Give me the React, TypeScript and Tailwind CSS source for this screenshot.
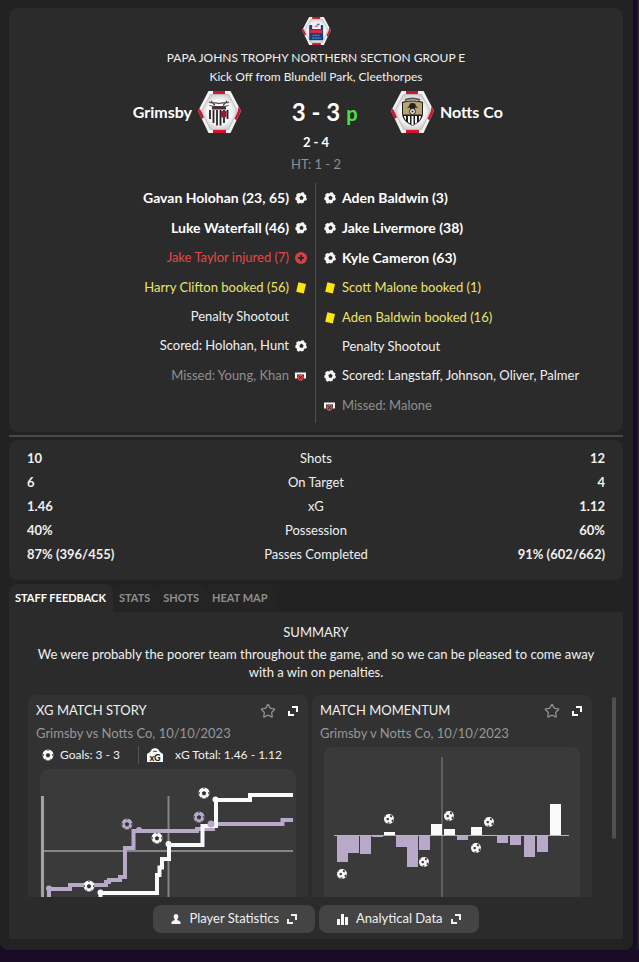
import { useState } from "react";
import type { ReactNode } from "react";
import { Star } from "lucide-react";
import clsx from "clsx";

type EventKind = "goal" | "injury" | "card" | "miss" | "note" | "scored";

type MatchEvent = { kind: EventKind; text: string };

const homeEvents: MatchEvent[] = [
  { kind: "goal", text: "Gavan Holohan (23, 65)" },
  { kind: "goal", text: "Luke Waterfall (46)" },
  { kind: "injury", text: "Jake Taylor injured (7)" },
  { kind: "card", text: "Harry Clifton booked (56)" },
  { kind: "note", text: "Penalty Shootout" },
  { kind: "scored", text: "Scored: Holohan, Hunt" },
  { kind: "miss", text: "Missed: Young, Khan" },
];

const awayEvents: MatchEvent[] = [
  { kind: "goal", text: "Aden Baldwin (3)" },
  { kind: "goal", text: "Jake Livermore (38)" },
  { kind: "goal", text: "Kyle Cameron (63)" },
  { kind: "card", text: "Scott Malone booked (1)" },
  { kind: "card", text: "Aden Baldwin booked (16)" },
  { kind: "note", text: "Penalty Shootout" },
  { kind: "scored", text: "Scored: Langstaff, Johnson, Oliver, Palmer" },
  { kind: "miss", text: "Missed: Malone" },
];

const stats = [
  { label: "Shots", home: "10", away: "12" },
  { label: "On Target", home: "6", away: "4" },
  { label: "xG", home: "1.46", away: "1.12" },
  { label: "Possession", home: "40%", away: "60%" },
  { label: "Passes Completed", home: "87% (396/455)", away: "91% (602/662)" },
];

const tabs = ["STAFF FEEDBACK", "STATS", "SHOTS", "HEAT MAP"];

// x position and value, negative values are home momentum
const momentum = [
  [13, -26], [24, -17], [36, -18], [48, -1], [60, 4], [72, -11], [83, -31], [95, -14], [107, 12],
  [120, 7], [133, -4], [147, 9], [160, 1], [173, -7], [186, -9], [200, -21], [213, -16], [226, 32],
];

const momentumGoals = [
  [65, 72], [125, 69], [165, 75], [152, 101], [100, 115], [18, 127],
];

const textStyles: Record<EventKind, string> = {
  goal: "text-sm font-bold text-white",
  injury: "text-[#e8474a]",
  card: "text-[#ebe46c]",
  miss: "text-[#8f8f8f]",
  note: "text-[#f0f0f0]",
  scored: "text-[#f0f0f0]",
};

function EventIcon({ kind }: { kind: EventKind }) {
  if (kind === "goal" || kind === "scored") {
    return (
      <svg viewBox="0 0 12 12" className="h-3 w-3 shrink-0" aria-hidden="true">
        <path
          d="M3.4 1 5.2 1.4 6.8.2 8.8.6 9.8 2.4 11.4 3.2 11 5.2 12 7 11 8.4 9.2 8.8 8.6 10.8 6.6 11.6 5.4 10.8 3.6 11.8 1.8 10.6 2 8.8.4 7.8.4 5.6 1.6 4.4 1.2 2.4Z"
          fill="#f7f7f7"
        />
        <path d="M6.400 3.600 8.600 5.200 7.800 7.800H5.200L4.400 5.200Z" fill="#2b2b2b" />
      </svg>
    );
  }
  if (kind === "injury") {
    return (
      <svg viewBox="0 0 12 12" className="h-3 w-3 shrink-0" aria-hidden="true">
        <circle cx="6" cy="6" r="6" fill="#d24045" />
        <path d="M6 3v6M3 6h6" stroke="#2b2b2b" strokeWidth="2" />
      </svg>
    );
  }
  if (kind === "card") {
    return (
      <svg viewBox="0 0 12 12" className="h-3 w-3 shrink-0" aria-hidden="true">
        <path d="M3.400.2 11 2 8.800 11.600 1.200 9.800Z" fill="#ffe60a" />
      </svg>
    );
  }
  if (kind === "miss") {
    return (
      <svg viewBox="0 0 12 12" className="h-3 w-3 shrink-0" aria-hidden="true">
        <path d="M1 8.500V3.500h9v5" fill="none" stroke="#f7f7f7" strokeWidth="2" />
        <circle cx="5.500" cy="7.600" r="3.200" fill="#e0484d" />
        <path d="m3.700 5.800 3.600 3.600M7.300 5.800 3.700 9.400" stroke="#2b2b2b" strokeWidth="1" />
      </svg>
    );
  }
  return <span className="h-3 w-0 shrink-0" />;
}

function EventList({ events, side }: { events: MatchEvent[]; side: "home" | "away" }) {
  return (
    <ul className={clsx(side === "home" ? "pr-2 text-right" : "border-l border-[#4f4f4f] pl-2")}>
      {events.map((event) => (
        <li
          key={event.text}
          className={clsx(
            "flex items-center gap-1.5",
            side === "home" && "flex-row-reverse",
            event.kind === "note" ? "h-7" : "h-[30px]",
            event.kind === "note" && (side === "home" ? "pr-3" : "pl-3"),
            textStyles[event.kind]
          )}
        >
          <EventIcon kind={event.kind} />
          <span className="whitespace-nowrap">{event.text}</span>
        </li>
      ))}
    </ul>
  );
}

function HexBadge({ id, size, children }: { id: string; size: string; children: ReactNode }) {
  return (
    <svg viewBox="0 0 43 42" className={clsx("shrink-0", size)} aria-hidden="true">
      <defs>
        <radialGradient id={id}>
          <stop offset="0.6" stopColor="#ffffff" />
          <stop offset="1" stopColor="#d2d2d2" />
        </radialGradient>
      </defs>
      <path d="M10.500 0h22L43 20 32.500 42h-22L0 20Z" fill="#f2f2f2" />
      <path d="M15 0h12v3H15ZM15 39h13v3H15Z" fill="#d0142f" />
      <path d="M1.200 17.500 0 20l3.800 8 2.400-2L3.400 20ZM40.500 15.500 43 20l-4.600 9.600-2-2.200L39.800 20Z" fill="#d0142f" />
      <path d="M12.500 3.500h18L39.500 20l-9 18.500h-18L3.500 20Z" fill={`url(#${id})`} stroke="#bdbdbd" strokeWidth="1" />
      {children}
    </svg>
  );
}

function CompetitionBadge() {
  return (
    <HexBadge id="hex-cup" size="h-7 w-[29px]">
      <rect x="10.500" y="12" width="21" height="23" rx="1.500" fill="#173f80" />
      <path d="M15 9h13v9H15Z" fill="#eef1f8" />
      <path d="m17 15 5-3 3 1-2 2Z" fill="#e07080" />
      <path d="M22 10h4v2h-4Z" fill="#4a6fae" />
      <rect x="12" y="19" width="18" height="5" fill="#e0283c" />
      <path d="M16 27.500h10M15 31.500h13" stroke="#7f97c8" strokeWidth="1.600" strokeDasharray="3 1" />
    </HexBadge>
  );
}

function GrimsbyBadge() {
  return (
    <HexBadge id="hex-home" size="h-[42px] w-[43px]">
      <path d="M11 11c3 2 6 0 10 1.500 4-1.500 7 .5 10-1.500M13 10l4 4.500M29 10l-4 4.500M11.500 14.500c6 1.500 13 1.500 19 0" fill="none" stroke="#4a4a4a" strokeWidth="1.200" />
      <path d="M11 17h20v9c0 5-4 8-10 9.500C15 34 11 31 11 26Z" fill="#f4f4f4" />
      <path d="M12 19v9M15.500 19v13M19 19v15.500M22.500 19v15.500M26 19v13M29.500 19v9" stroke="#262626" strokeWidth="1.800" />
      <path d="M14 15.500h14v3H14Z" fill="#4f2a32" />
      <path d="M23 20h5.500v5.500l-2.800 2-2.700-2Z" fill="#8f1f30" />
    </HexBadge>
  );
}

function NottsBadge() {
  return (
    <HexBadge id="hex-away" size="h-[42px] w-[43px]">
      <path d="M14 9c5-2 10-2 15 0" fill="none" stroke="#555" strokeWidth="2" />
      <path d="M11 11c6-2 15-2 21 0v11c0 6-4.500 10-10.500 13C15.500 32 11 28 11 22Z" fill="#1d1d1d" />
      <path d="M12 11.800c6-1.600 13-1.600 19 0V23.500H12Z" fill="#b9a471" />
      <path d="M13 25h2v4.500l-2-3.500ZM17 25h2v7.500l-2-1.500ZM20.500 25h2V34l-1 .5-1-.5ZM24 25h2v6.500L24 33ZM28 25h2l-.5 2-1.500 3Z" fill="#fff" />
      <path d="m16 17 2-2 1-2.500 2.500-.5 2.500.5 1 2.500 2 2-3-.5v1.500h-5v-1.500Z" fill="#222" />
      <circle cx="21.500" cy="20.500" r="3" fill="#e8e8e8" stroke="#222" />
      <circle cx="21.500" cy="20.500" r="1" fill="#222" />
    </HexBadge>
  );
}

function ChartBall({ x, y, color = "#fafafa" }: { x: number; y: number; color?: string }) {
  return (
    <g transform={`translate(${x} ${y})`}>
      <circle r="5.5" fill={color} />
      <path d="M0-2 2.200-.4 1.400 2.200H-1.400L-2.200-.4Z" fill="#333" />
      <path d="M-1.600-5.200 1.600-5.200 0-4ZM-5.300-1.200-4-.6-4.400 1.200-5.300 1.300ZM5.300-1.200 4-.6 4.400 1.200 5.300 1.300ZM-3.400 4.200-2.600 3.400-1.400 5.100ZM3.400 4.200 2.600 3.400 1.400 5.100Z" fill="#3a3a3a" />
    </g>
  );
}

function MomentumBall({ x, y }: { x: number; y: number }) {
  return (
    <g transform={`translate(${x} ${y})`}>
      <circle r="5" fill="#fafafa" />
      <path d="M-2.500-.8-.8-1.300.2 0-.8 1.500-2.500.8ZM1.200-4.200l2 1-.6 1.800-1.800-.8ZM2.800.8l2-.2-1 2.600-1.400-.8ZM-1.500 3.200l2.200.2-.6 1.600-1.600-.4ZM-4.400-2.400l1.200-1 .2 1Z" fill="#3a3a3a" />
    </g>
  );
}

function ExpandIcon() {
  return (
    <svg viewBox="0 0 10 10" className="h-2.5 w-2.5 shrink-0" aria-hidden="true">
      <path d="M4 1h5v5M1 5v4h5" fill="none" stroke="currentColor" strokeWidth="2" />
    </svg>
  );
}

function XgIcon() {
  return (
    <svg viewBox="0 0 16 14" className="h-3.5 w-4" aria-hidden="true">
      <path d="M0 14V6l3-2 2-3 3-1 3 1 2 3 3 2v8Z" fill="#fafafa" />
      <path d="M5.500 3.800c1-1.500 4-1.500 5 0Z" fill="#333" />
      <text x="8" y="12.500" textAnchor="middle" fontSize="9" fontWeight="900" fill="#222">xG</text>
    </svg>
  );
}

function XgChart() {
  return (
    <svg viewBox="0 0 256 128" className="block w-full rounded-t-lg bg-[#3a3a3a]" role="img" aria-label="Cumulative xG">
      <path d="M4 82H253M128.500 27V128" stroke="#858585" strokeWidth="2" />
      <path d="M2.500 27V128" stroke="#a3a3a3" strokeWidth="3" />
      <path
        d="M9 128V120H30V116H66V113H69V111H80V108H85V79H93.500V62H157V60H173V55H242.500V51H253"
        fill="none"
        stroke="#b8a9c9"
        strokeWidth="4"
      />
      <path
        d="M60.500 128V124H117V106H119.500V98.500H122V90H129V76H162.500V57H176V31H210V26H253"
        fill="none"
        stroke="#fafafa"
        strokeWidth="4"
      />
      <g fill="#b8a9c9">
        <circle cx="9" cy="119.500" r="3" />
        <circle cx="99" cy="61" r="3" />
        <circle cx="171" cy="55" r="3.500" />
      </g>
      <g fill="#fafafa">
        <circle cx="60.500" cy="123.500" r="3" />
        <circle cx="128.500" cy="75" r="3" />
        <circle cx="175.500" cy="30.500" r="3" />
      </g>
      <ChartBall x={164} y={24} />
      <ChartBall x={87} y={55} color="#b8a9c9" />
      <ChartBall x={159} y={48} color="#b8a9c9" />
      <ChartBall x={117} y={69} />
      <ChartBall x={49} y={117} />
    </svg>
  );
}

function MomentumChart() {
  return (
    <svg viewBox="0 0 256 150" className="block w-full rounded-t-lg bg-[#3a3a3a]" role="img" aria-label="Match momentum">
      <path d="M118 10V150" stroke="#5f5f5f" strokeWidth="2" />
      {momentum.map(([x, value]) => (
        <rect
          key={x}
          x={x}
          y={value < 0 ? 89 : 89 - value}
          width="11"
          height={Math.abs(value)}
          fill={value < 0 ? "#b8a9c9" : "#fafafa"}
        />
      ))}
      <path d="M10 88.500H245" stroke="#b5b5b5" strokeWidth="1" />
      {momentumGoals.map(([x, y]) => (
        <MomentumBall key={x} x={x} y={y} />
      ))}
    </svg>
  );
}

function ChartCard({ title, subtitle, children }: { title: string; subtitle: string; children: ReactNode }) {
  return (
    <article className="min-w-0 rounded-t-lg bg-[#323232] pt-1.5">
      <header className="flex h-5 items-center gap-3 pr-2.5 pl-2">
        <h3 className="flex-1">{title}</h3>
        <button type="button" aria-label="Add to favourites" className="text-[#8f8f8f]">
          <Star className="h-4 w-4" strokeWidth={2} />
        </button>
        <button type="button" aria-label={`Expand ${title}`} className="text-white">
          <ExpandIcon />
        </button>
      </header>
      <p className="pl-2 leading-6 text-[#979797]">{subtitle}</p>
      {children}
    </article>
  );
}

export default function App() {
  const [activeTab, setActiveTab] = useState(tabs[0]);

  return (
    <div className="flex min-h-screen gap-1 bg-[#190a26] pb-3 font-[Lato,sans-serif] text-[13px] text-[#f0f0f0]">
      <main className="min-w-0 flex-1 rounded-b-lg bg-[#222222] pt-2 pr-2.5 pb-[11px] pl-[9px]">
        <section className="rounded-lg bg-[#2b2b2b] pt-[9px] pb-[9px] text-center">
          <div className="flex justify-center">
            <CompetitionBadge />
          </div>
          <h1 className="mt-1 text-xs leading-[18px]">PAPA JOHNS TROPHY NORTHERN SECTION GROUP E</h1>
          <p className="text-xs leading-5">Kick Off from Blundell Park, Cleethorpes</p>

          <div className="mt-1 grid grid-cols-[1fr_150px_1fr] items-center font-bold text-white">
            <div className="flex items-center justify-end gap-1.5 text-base">
              <span>Grimsby</span>
              <GrimsbyBadge />
            </div>
            <div className="text-2xl leading-[42px]">
              <span className="relative">
                3 - 3<span className="absolute top-0 left-full ml-1.5 text-xl leading-8 text-[#4be04b]">p</span>
              </span>
            </div>
            <div className="flex items-center gap-1.5 text-base">
              <NottsBadge />
              <span>Notts Co</span>
            </div>
          </div>

          <p className="leading-[18px] font-bold text-white">2 - 4</p>
          <p className="mt-1 leading-[18px] text-[#8f8f8f]">HT: 1 - 2</p>

          <div className="mt-2.5 grid min-h-[240px] grid-cols-2 pr-0.5 text-left">
            <EventList events={homeEvents} side="home" />
            <EventList events={awayEvents} side="away" />
          </div>
        </section>

        <hr className="my-[3px] border-t-2 border-[#4a4a4a]" />

        <section className="rounded-lg bg-[#2b2b2b] px-[18px] pt-[7px] pb-[13px]">
          <table className="w-full table-fixed">
            <tbody>
              {stats.map((row) => (
                <tr key={row.label} className="h-6">
                  <td className="text-left font-bold">{row.home}</td>
                  <th scope="row" className="font-normal">{row.label}</th>
                  <td className="text-right font-bold">{row.away}</td>
                </tr>
              ))}
            </tbody>
          </table>
        </section>

        <div role="tablist" className="mt-1 flex">
          {tabs.map((tab) => (
            <button
              key={tab}
              type="button"
              role="tab"
              aria-selected={tab === activeTab}
              onClick={() => setActiveTab(tab)}
              className={clsx(
                "h-7 rounded-t-lg pr-[7px] pl-1.5 text-[11px] font-bold",
                tab === activeTab ? "bg-[#2b2b2b] text-white" : "bg-[#242424] text-[#8f8f8f]"
              )}
            >
              {tab}
            </button>
          ))}
        </div>

        <section className="bg-[#2b2b2b] pt-[11px] pb-1.5">
          <h2 className="text-center leading-[18px]">SUMMARY</h2>
          <p className="mx-auto mt-1 max-w-[580px] text-center leading-[18px]">
            We were probably the poorer team throughout the game, and so we can be pleased to come away with a win on
            penalties.
          </p>

          <div className="mt-[14px] flex gap-5 pr-[7px] pl-[19px]">
            <div className="grid min-w-0 flex-1 grid-cols-2 gap-1">
              <ChartCard title="XG MATCH STORY" subtitle="Grimsby vs Notts Co, 10/10/2023">
                <div className="mb-1 flex h-5 items-center pl-3.5 text-xs">
                  <svg viewBox="-6 -6 12 12" className="h-3 w-3" aria-hidden="true">
                    <ChartBall x={0} y={0} />
                  </svg>
                  <span className="ml-1.5">Goals: 3 - 3</span>
                  <span className="mr-2 ml-[18px] h-[18px] border-l border-[#555555]" />
                  <XgIcon />
                  <span className="ml-3">xG Total: 1.46 - 1.12</span>
                </div>
                <div className="px-3">
                  <XgChart />
                </div>
              </ChartCard>
              <ChartCard title="MATCH MOMENTUM" subtitle="Grimsby v Notts Co, 10/10/2023">
                <div className="px-3 pt-0.5">
                  <MomentumChart />
                </div>
              </ChartCard>
            </div>
            <div className="mt-0.5 h-[142px] w-1 rounded-full bg-[#505050]" />
          </div>

          <div className="mt-2 flex justify-center gap-1">
            <button type="button" className="flex h-7 items-center gap-2 rounded-lg bg-[#444444] px-[18px]">
              <svg viewBox="0 0 10 10" className="h-2.5 w-2.5" fill="#f7f7f7" aria-hidden="true">
                <ellipse cx="5" cy="2.800" rx="2.300" ry="2.800" />
                <path d="M4 5h2l.5 1.200C9 6.800 10 8 9.500 10H.5C0 8 1 6.800 3.500 6.200Z" />
              </svg>
              Player Statistics
              <ExpandIcon />
            </button>
            <button type="button" className="flex h-7 items-center gap-2 rounded-lg bg-[#444444] px-[18px]">
              <svg viewBox="0 0 11 11" className="h-[11px] w-[11px]" fill="#f7f7f7" aria-hidden="true">
                <path d="M0 5h3v6H0ZM4 0h3v11H4ZM8 3h3v8H8Z" />
              </svg>
              Analytical Data
              <ExpandIcon />
            </button>
          </div>
        </section>
      </main>
      <aside className="w-0.5 rounded-bl-lg bg-[#222222]" />
    </div>
  );
}
